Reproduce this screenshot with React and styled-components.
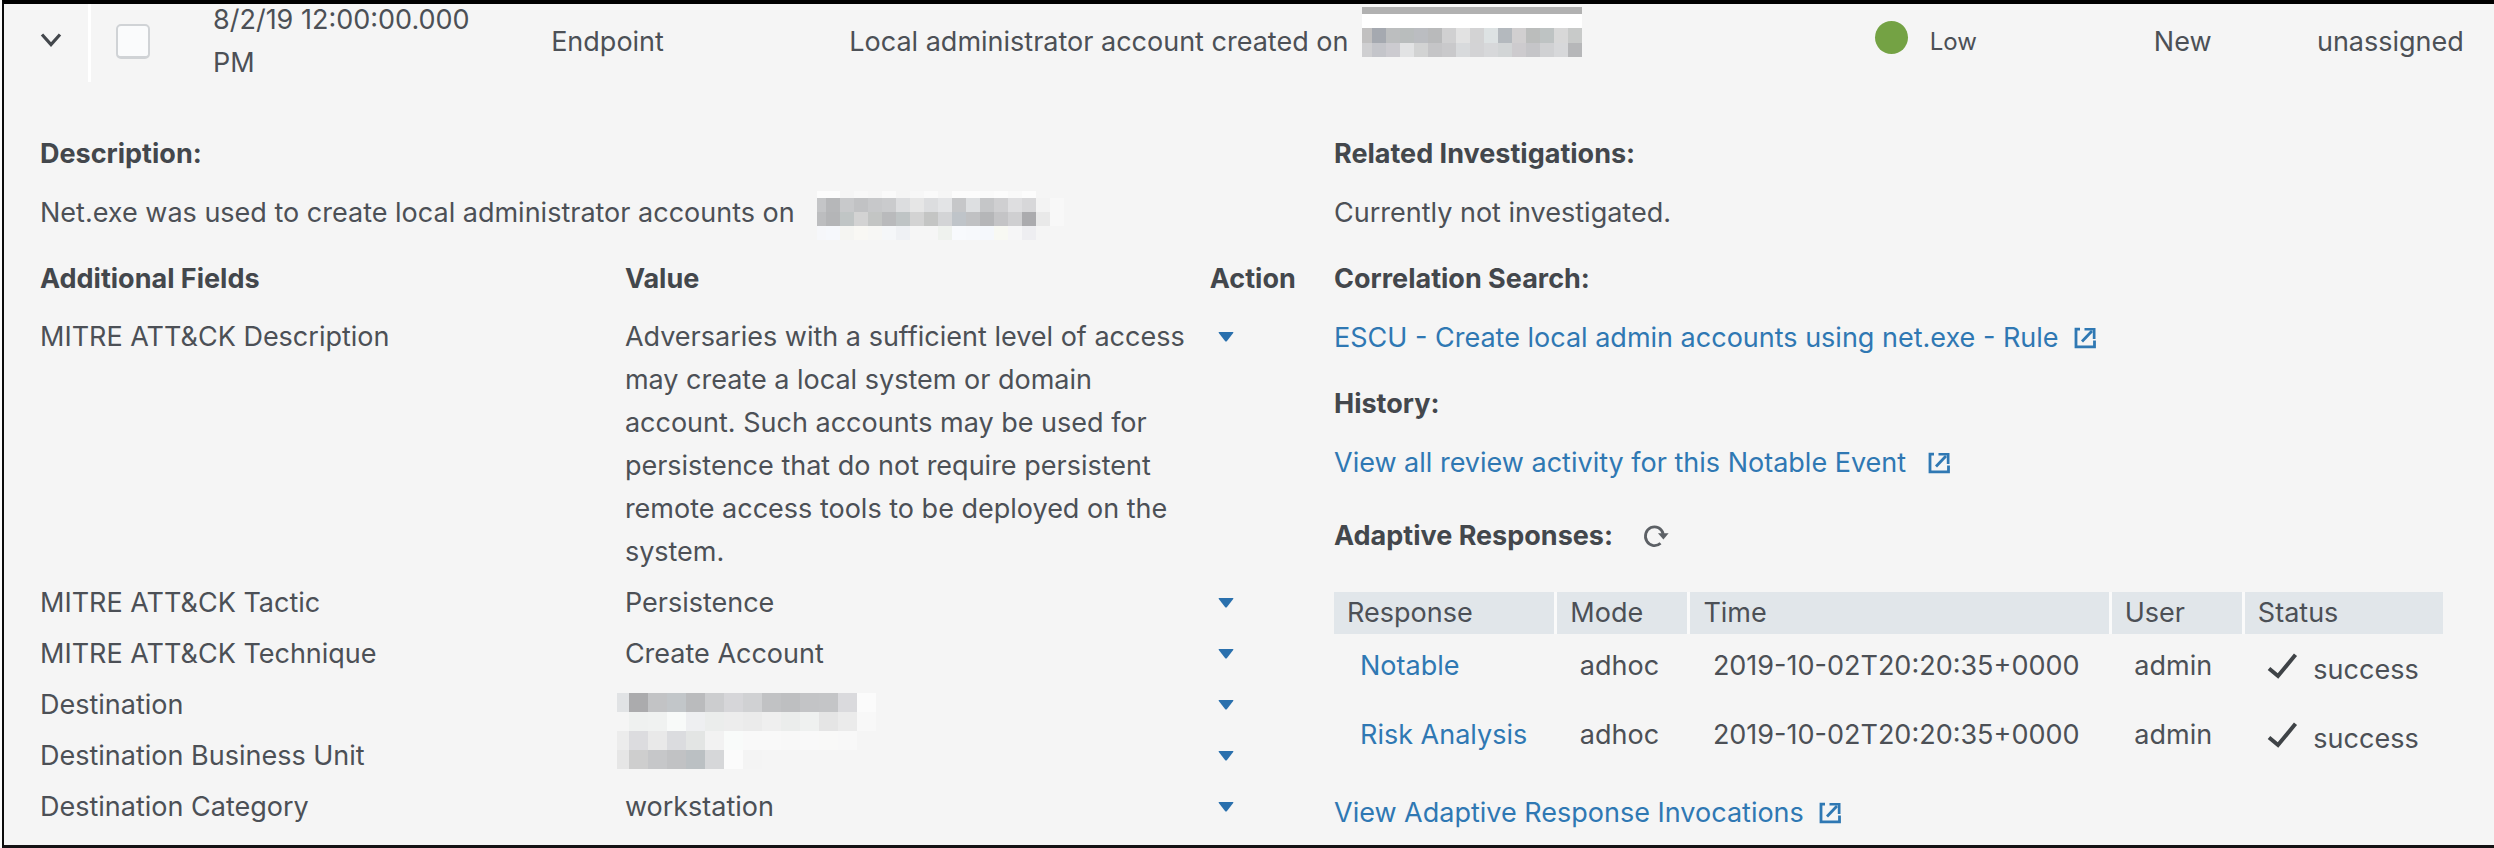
// App.jsx

import React from "react"
import styled, { createGlobalStyle } from "styled-components"

const GlobalStyle = createGlobalStyle`
  * {
    box-sizing: border-box;
  }

  body {
    margin: 0;
    background: #fbfbfb;
    color: #4c5056;
    font-family: Inter, "Open Sans", sans-serif;
    font-size: 27px;
    line-height: 43px;
  }

  button, input {
    font: inherit;
    color: inherit;
  }
`

const Event = styled.main`
  min-height: 100vh;
  margin-left: 2px;
  background: #f5f5f5;
  border-top: 4px solid #000;
  border-left: 2px solid #0b0b0b;
  border-bottom: 3px solid #141214;
`

const Summary = styled.header`
  display: grid;
  grid-template-columns: 87px 122px 338fr 298fr 1025fr 279fr 163fr 177fr;
  grid-template-rows: 74px;
  align-items: center;
`

const ToggleCell = styled.div`
  display: flex;
  align-self: start;
  height: 78px;
  padding: 0 0 6px 32px;
  border-right: 3px solid #fff;
`

const IconButton = styled.button`
  display: inline-flex;
  align-items: center;
  justify-content: center;
  padding: 0;
  border: 0;
  background: none;
  cursor: pointer;
`

const CheckCell = styled.div`
  display: flex;
  padding-left: 25px;
`

const Checkbox = styled.input`
  appearance: none;
  width: 34px;
  height: 35px;
  margin: 0;
  background: #fafbfc;
  border: 2px solid #d0d3d6;
  border-bottom-width: 3px;
  border-radius: 5px;

  &:checked {
    background: #2f78b3;
  }
`

const EventTime = styled.time`
  padding-right: 50px;
`

const Title = styled.div`
  display: flex;
  gap: 14px;
  white-space: nowrap;
`

const Urgency = styled.div`
  display: flex;
  align-items: center;
  gap: 22px;
  font-size: 24px;
`

const Dot = styled.span`
  width: 33px;
  height: 33px;
  margin-bottom: 8px;
  border-radius: 50%;
  background: #74a244;
`

const Details = styled.div`
  display: grid;
  grid-template-columns: 1294fr 1160fr;
  padding: 54px 0 8px 36px;
`

const Heading = styled.h2`
  display: flex;
  align-items: center;
  gap: 30px;
  margin: 0 0 16px;
  font-size: 27px;
  font-weight: 700;
  color: #43474c;
`

const Text = styled.p`
  display: flex;
  gap: 22px;
  margin: 0 0 23px;
  white-space: nowrap;
`

const FieldTable = styled.table`
  width: 100%;
  table-layout: fixed;
  border-collapse: collapse;
  text-align: left;

  th {
    padding: 0 0 11px;
    font-weight: 700;
    color: #43474c;
  }

  th:first-child, th:nth-child(2) {
    width: 45.2%;
  }

  td {
    padding: 4px 0;
    vertical-align: top;
  }

  td:nth-child(2) {
    padding-right: 16px;
  }
`

const ActionButton = styled(IconButton)`
  display: flex;
  width: 33px;
  height: 43px;
`

const Link = styled.a`
  display: inline-flex;
  align-items: center;
  gap: ${(props) => (props.$wide ? "22px" : "15px")};
  color: #2f78b3;
  text-decoration: none;

  &:hover {
    text-decoration: underline;
  }
`

const Responses = styled.section`
  padding-top: 7px;
`

const ResponseTable = styled.table`
  width: calc(100% - 51px);
  margin: 35px 0 19px;
  table-layout: fixed;
  border-collapse: collapse;
  text-align: left;

  th {
    height: 42px;
    padding: 0 0 0 13px;
    line-height: 42px;
    font-weight: 400;
    background: #e1e6ea;
    border-right: 3px solid #fafafa;
  }

  th:last-child {
    border-right: 0;
  }

  td {
    padding: 10px 0 16px 24px;
    vertical-align: top;
  }

  td:first-child {
    padding-left: 26px;
  }

  td:last-child {
    padding-bottom: 12px;
  }
`

const Col = styled.col`
  width: ${(props) => props.$width};
`

const Status = styled.span`
  display: flex;
  gap: 15px;

  svg {
    margin-top: 9px;
  }

  span {
    padding-top: 4px;
  }
`

const MosaicSvg = styled.svg`
  display: block;
  flex: none;
  height: 43px;
  overflow: visible;
`

// first column is narrower than the rest, the same for every mosaic
const Mosaic = ({ first, cell, rows, offset = 0 }) => (
  <MosaicSvg
    width={first + cell * (rows[0].colors.length - 1)}
    shapeRendering="crispEdges"
    role="img"
    aria-label="Redacted"
  >
    {rows.map((row) =>
      row.colors.map((color, i) => (
        <rect
          key={row.y + "-" + i}
          x={offset + (i === 0 ? 0 : first + cell * (i - 1))}
          y={row.y}
          width={i === 0 ? first : cell}
          height={row.h}
          fill={color}
        />
      ))
    )}
  </MosaicSvg>
)

const strip = (color, count) => Array(count).fill(color)

const titleHost = [
  { y: -13, h: 7, colors: strip("#b1b1b1", 16) },
  { y: -6, h: 14, colors: strip("#ffffff", 16) },
  { y: 8, h: 15, colors: ["#c1c0c0", "#a5a9b0", "#bcbebf", "#b9bdbd", "#bbbdc1", "#b9babb", "#d0d0d1", "#e2e2e2", "#d3d3d4", "#dde2e3", "#b4b9be", "#d1cfd0", "#bbbdbc", "#bec3c3", "#d8d8d8", "#c8cac9"] },
  { y: 23, h: 14, colors: ["#cfcfd1", "#c4c5ca", "#cccbd0", "#e2e3e4", "#d2d3d3", "#c5c5c7", "#c9c9cb", "#d8dadc", "#d3d3d5", "#d7d8da", "#d2d5d6", "#cdcbce", "#c5c5c8", "#d0d1d3", "#d7d8da", "#b6b7b9"] },
]

const descriptionHost = [
  { y: 0, h: 7, colors: ["#fcfcfc", "#fcfcfc", "#f5f5f5", "#f8f8f8", "#f6f6f6", "#fafafa", "#f5f5f5", "#f7f7f7", "#fafafa", "#f6f6f6", "#fcfcfc", "#fcfcfc", "#fafafa", "#fcfcfc", "#f9f9f9", "#fcfcfc", "#f5f5f5", "#f5f5f5"] },
  { y: 7, h: 14, colors: ["#c4c5c7", "#b6b7b9", "#c8c9cb", "#c1c2c4", "#c7c8ca", "#cacbcd", "#dcdddf", "#e6e6e6", "#dcdddf", "#e3e4e6", "#c6c7c9", "#dddfe1", "#c5c6c8", "#cfcfd1", "#dedee0", "#d7d7d9", "#f3f3f3", "#f8f8f8"] },
  { y: 21, h: 14, colors: ["#bcbdbf", "#b4b5b7", "#c0c5c5", "#d3d3d3", "#c3c5c4", "#b9babc", "#bfc4c5", "#d3d3d3", "#c4c5c4", "#d3d4d6", "#bfc4c9", "#c0c1c3", "#b5b6b8", "#c4c4c6", "#cfcfd1", "#ababae", "#e9e9e9", "#f8f8f8"] },
  { y: 35, h: 14, colors: ["#f6f7fa", "#f6f8fc", "#f5f5f2", "#f9f8f4", "#f7f7f5", "#f5f7f9", "#eff1f4", "#f6f6f6", "#f6f6f6", "#eff2ee", "#f8fafd", "#f7f9fc", "#f5f8fc", "#f8f9f3", "#f6f6f7", "#eeeef1", "#f5f5f5", "#f5f5f5"] },
]

const destinationHost = [
  { y: 10, h: 19, colors: ["#e1e3e5", "#ababad", "#c2c3c5", "#c2c6c9", "#babbbd", "#cccdcf", "#d6d6d9", "#d0d1d3", "#c1c2c4", "#bebfc1", "#c3c4c6", "#c4c5c7", "#dadadd", "#fbfbfb"] },
  { y: 29, h: 19, colors: ["#f5f5f5", "#eff1f0", "#f0f2f1", "#f8faf9", "#eeeff1", "#ebedec", "#ededed", "#ebebeb", "#efefef", "#ebedec", "#eff1f0", "#e5e5e5", "#ebebeb", "#f8f8f8"] },
]

const unitHost = [
  { y: -3, h: 19, colors: ["#ececec", "#dcdcdf", "#e9e9e9", "#dbdcdf", "#e3e5e4", "#f2f2f2", "#f9fbfa", "#f9f9f9", "#f9f9f9", "#f8f8f8", "#f9f9f9", "#f9f9f8", "#f8f8f8"] },
  { y: 16, h: 19, colors: ["#e6e6e6", "#cecece", "#c6c7c9", "#c1c2c4", "#bbc0c3", "#d6d7d9", "#fbfbfb", "#f4f4f4", "#f5f5f5", "#f5f5f5", "#f5f5f5", "#f5f5f5", "#f5f5f5"] },
]

const fields = [
  {
    name: "MITRE ATT&CK Description",
    value:
      "Adversaries with a sufficient level of access may create a local system or domain account. Such accounts may be used for persistence that do not require persistent remote access tools to be deployed on the system.",
  },
  { name: "MITRE ATT&CK Tactic", value: "Persistence" },
  { name: "MITRE ATT&CK Technique", value: "Create Account" },
  { name: "Destination", value: <Mosaic first={12} cell={19} rows={destinationHost} offset={-8} /> },
  { name: "Destination Business Unit", value: <Mosaic first={12} cell={19} rows={unitHost} offset={-8} /> },
  { name: "Destination Category", value: "workstation" },
]

const responses = ["Notable", "Risk Analysis"]

const Chevron = () => (
  <svg width="30" height="20" viewBox="0 0 30 20" aria-hidden="true">
    <path d="M6 4.5L15 14.5L24 4.5" fill="none" stroke="#43474c" strokeWidth="3.2" />
  </svg>
)

const Caret = () => (
  <svg width="16" height="10" viewBox="0 0 16 10" aria-hidden="true">
    <path d="M1.2 0h13.6q1 0 .4.9L9 9q-1 1.2-2 0L.8.9Q.2 0 1.2 0z" fill="#2a70ad" />
  </svg>
)

const External = () => (
  <svg width="22" height="22" viewBox="0 0 22 22" aria-hidden="true">
    <path d="M6 2.2H2V19.8H20.5V13.5" fill="none" stroke="#2f78b3" strokeWidth="2.8" />
    <path d="M8 14.5L18 4" fill="none" stroke="#2f78b3" strokeWidth="2.8" />
    <path d="M10.5 1H21.5V12H18.8V3.6H10.5z" fill="#2f78b3" />
  </svg>
)

const Refresh = () => (
  <svg width="26" height="24" viewBox="0 0 26 24" aria-hidden="true">
    <path d="M17.5 19.2A9 9.4 0 1 1 20.2 10" fill="none" stroke="#5c6065" strokeWidth="2.8" />
    <path d="M15 9.3H25.6L20.4 15.4z" fill="#5c6065" />
  </svg>
)

const Check = () => (
  <svg width="31" height="26" viewBox="0 0 31 26" aria-hidden="true">
    <path d="M2 15.5L11 23L28.5 1.8" fill="none" stroke="#3f4347" strokeWidth="4" />
  </svg>
)

const App = () => {
  return (
    <>
      <GlobalStyle />
      <Event>
        <Summary>
          <ToggleCell>
            <IconButton type="button" aria-label="Collapse event" aria-expanded="true">
              <Chevron />
            </IconButton>
          </ToggleCell>
          <CheckCell>
            <Checkbox type="checkbox" aria-label="Select event" />
          </CheckCell>
          <EventTime>8/2/19 12:00:00.000 PM</EventTime>
          <span>Endpoint</span>
          <Title>
            Local administrator account created on
            <Mosaic first={10} cell={14} rows={titleHost} />
          </Title>
          <Urgency>
            <Dot />
            Low
          </Urgency>
          <span>New</span>
          <span>unassigned</span>
        </Summary>

        <Details>
          <section>
            <Heading>Description:</Heading>
            <Text>
              Net.exe was used to create local administrator accounts on
              <Mosaic first={9} cell={14} rows={descriptionHost} />
            </Text>
            <FieldTable>
              <thead>
                <tr>
                  <th>Additional Fields</th>
                  <th>Value</th>
                  <th>Action</th>
                </tr>
              </thead>
              <tbody>
                {fields.map((field) => (
                  <tr key={field.name}>
                    <td>{field.name}</td>
                    <td>{field.value}</td>
                    <td>
                      <ActionButton type="button" aria-label={"Actions for " + field.name}>
                        <Caret />
                      </ActionButton>
                    </td>
                  </tr>
                ))}
              </tbody>
            </FieldTable>
          </section>

          <section>
            <Heading>Related Investigations:</Heading>
            <Text>Currently not investigated.</Text>
            <Heading>Correlation Search:</Heading>
            <Text>
              <Link href="#rule">
                ESCU - Create local admin accounts using net.exe - Rule
                <External />
              </Link>
            </Text>
            <Heading>History:</Heading>
            <Text>
              <Link href="#history" $wide>
                View all review activity for this Notable Event
                <External />
              </Link>
            </Text>
            <Responses>
              <Heading>
                Adaptive Responses:
                <IconButton type="button" aria-label="Refresh">
                  <Refresh />
                </IconButton>
              </Heading>
              <ResponseTable>
                <colgroup>
                  <Col $width="20%" />
                  <Col $width="12%" />
                  <Col $width="38%" />
                  <Col $width="12%" />
                  <Col $width="18%" />
                </colgroup>
                <thead>
                  <tr>
                    <th>Response</th>
                    <th>Mode</th>
                    <th>Time</th>
                    <th>User</th>
                    <th>Status</th>
                  </tr>
                </thead>
                <tbody>
                  {responses.map((name) => (
                    <tr key={name}>
                      <td>
                        <Link href="#response">{name}</Link>
                      </td>
                      <td>adhoc</td>
                      <td>2019-10-02T20:20:35+0000</td>
                      <td>admin</td>
                      <td>
                        <Status>
                          <Check />
                          <span>success</span>
                        </Status>
                      </td>
                    </tr>
                  ))}
                </tbody>
              </ResponseTable>
              <Link href="#invocations">
                View Adaptive Response Invocations
                <External />
              </Link>
            </Responses>
          </section>
        </Details>
      </Event>
    </>
  )
}

export default App
